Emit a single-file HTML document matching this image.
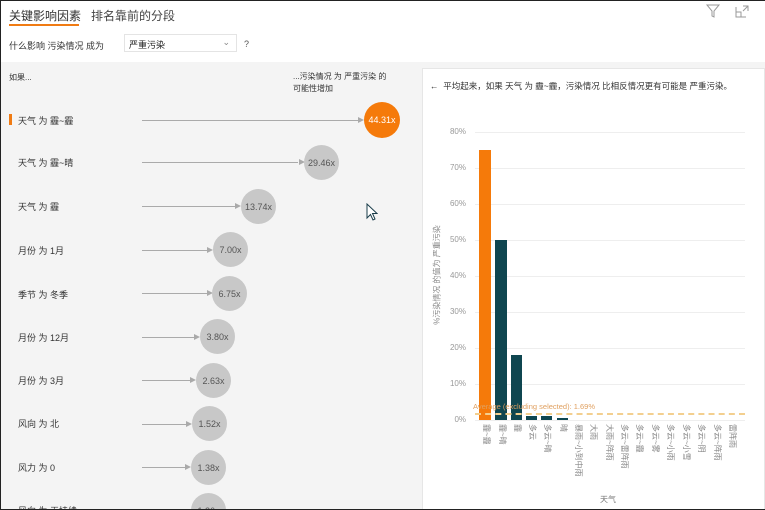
<!DOCTYPE html>
<html style="width:765px;height:510px;overflow:hidden"><head><meta charset="utf-8"><style>
*{margin:0;padding:0;box-sizing:border-box}
body{width:765px;height:510px;overflow:hidden;background:#fff;font-family:"Liberation Sans","Noto Sans CJK SC",sans-serif;position:relative;color:#333}
.a{position:absolute;white-space:nowrap}
.frame{position:absolute;left:0;top:0;width:765px;height:510px;border:1px solid #222;border-right:none;pointer-events:none}
.circ{position:absolute;border-radius:50%;background:#c8c8c8;color:#555;font-size:9px;display:flex;align-items:center;justify-content:center}
.ln{position:absolute;height:1px;background:#aaa}
.ar{position:absolute;width:0;height:0;border-left:6px solid #aaa;border-top:3px solid transparent;border-bottom:3px solid transparent}
.lab{position:absolute;font-size:9px;color:#333;left:18px;white-space:nowrap}
.yl{position:absolute;font-size:8px;color:#999;right:299px;width:30px;text-align:right}
.g{position:absolute;left:475px;width:270px;height:1px;background:#eee}
.xl{position:absolute;top:424px;font-size:8px;color:#888;writing-mode:vertical-rl;text-orientation:sideways;line-height:10px;white-space:nowrap}
</style></head><body>
<div class="a" style="left:9px;top:7px;font-size:12px;color:#333">关键影响因素</div>
<div style="position:absolute;left:9px;top:24px;width:70px;height:2px;background:#f07b13"></div>
<div class="a" style="left:91px;top:7px;font-size:12px;color:#444">排名靠前的分段</div>
<svg class="a" style="left:705px;top:3px" width="16" height="16" viewBox="0 0 16 16"><path d="M2 2H14L9 8V14L7 13V8Z" fill="none" stroke="#999" stroke-width="1"/></svg>
<svg class="a" style="left:734px;top:3px" width="16" height="16" viewBox="0 0 16 16"><path d="M2 4V14H12M2 9H7V14M9 3H14V8M14 3L9 8" fill="none" stroke="#999" stroke-width="1"/></svg>
<div class="a" style="left:9px;top:39px;font-size:9px;color:#333">什么影响 污染情况 成为</div>
<div class="a" style="left:124px;top:34px;width:113px;height:18px;border:1px solid #e4e4e4;font-size:9px;padding:3px 4px;color:#222">严重污染<span style="position:absolute;right:6px;top:2px;color:#888">⌄</span></div>
<div class="a" style="left:244px;top:39px;font-size:9px;color:#555">?</div>
<div style="position:absolute;left:0;top:62px;width:418px;height:448px;background:#f4f4f4"></div>
<div style="position:absolute;left:418px;top:62px;width:347px;height:448px;background:#f4f4f4"></div>
<div style="position:absolute;left:422px;top:68px;width:343px;height:442px;background:#fff;border:1px solid #e6e6e6"></div>
<div class="a" style="left:9px;top:72px;font-size:8px;color:#333">如果...</div>
<div class="a" style="left:293px;top:71px;font-size:8px;color:#333;line-height:12px">...污染情况 为 严重污染 的<br>可能性增加</div>
<div style="position:absolute;left:9px;top:114px;width:3px;height:11px;background:#f07b13"></div>
<div class="lab" style="top:114px">天气 为 霾~霾</div>
<div class="lab" style="top:156px">天气 为 霾~晴</div>
<div class="lab" style="top:200px">天气 为 霾</div>
<div class="lab" style="top:244px">月份 为 1月</div>
<div class="lab" style="top:288px">季节 为 冬季</div>
<div class="lab" style="top:331px">月份 为 12月</div>
<div class="lab" style="top:374px">月份 为 3月</div>
<div class="lab" style="top:417px">风向 为 北</div>
<div class="lab" style="top:461px">风力 为 0</div>
<div class="lab" style="top:504px">风向 为 无持续</div>
<div class="ln" style="left:142px;top:120px;width:218px"></div><div class="ar" style="left:358px;top:117px"></div>
<div class="circ" style="left:364px;top:102px;width:36px;height:36px;background:#f57a0a;color:#fff;font-size:9px">44.31x</div>
<div class="ln" style="left:142px;top:162px;width:156px"></div><div class="ar" style="left:299px;top:159px"></div>
<div class="circ" style="left:304px;top:145px;width:35px;height:35px">29.46x</div>
<div class="ln" style="left:142px;top:206px;width:93px"></div><div class="ar" style="left:235px;top:203px"></div>
<div class="circ" style="left:241px;top:189px;width:35px;height:35px">13.74x</div>
<div class="ln" style="left:142px;top:250px;width:65px"></div><div class="ar" style="left:207px;top:247px"></div>
<div class="circ" style="left:213px;top:232px;width:35px;height:35px">7.00x</div>
<div class="ln" style="left:142px;top:293px;width:65px"></div><div class="ar" style="left:207px;top:290px"></div>
<div class="circ" style="left:212px;top:276px;width:35px;height:35px">6.75x</div>
<div class="ln" style="left:142px;top:337px;width:52px"></div><div class="ar" style="left:194px;top:334px"></div>
<div class="circ" style="left:200px;top:319px;width:35px;height:35px">3.80x</div>
<div class="ln" style="left:142px;top:380px;width:48px"></div><div class="ar" style="left:190px;top:377px"></div>
<div class="circ" style="left:196px;top:363px;width:35px;height:35px">2.63x</div>
<div class="ln" style="left:142px;top:424px;width:44px"></div><div class="ar" style="left:186px;top:421px"></div>
<div class="circ" style="left:192px;top:406px;width:35px;height:35px">1.52x</div>
<div class="ln" style="left:142px;top:467px;width:43px"></div><div class="ar" style="left:185px;top:464px"></div>
<div class="circ" style="left:191px;top:450px;width:35px;height:35px">1.38x</div>
<div class="circ" style="left:191px;top:493px;width:35px;height:35px">1.26x</div>
<svg class="a" style="left:366px;top:203px" width="12" height="18" viewBox="0 0 12 18"><path d="M1 1V15L4.5 11.5L7 17L9 16L6.5 10.5H11Z" fill="#fff" stroke="#1a3d4a" stroke-width="1"/></svg>
<div class="a" style="left:430px;top:80px;font-size:8.5px;color:#333">←&nbsp; 平均起来，如果 天气 为 霾~霾，污染情况 比相反情况更有可能是 严重污染。</div>
<div class="yl" style="top:127px">80%</div><div class="g" style="top:132px"></div>
<div class="yl" style="top:163px">70%</div><div class="g" style="top:168px"></div>
<div class="yl" style="top:199px">60%</div><div class="g" style="top:204px"></div>
<div class="yl" style="top:235px">50%</div><div class="g" style="top:240px"></div>
<div class="yl" style="top:271px">40%</div><div class="g" style="top:276px"></div>
<div class="yl" style="top:307px">30%</div><div class="g" style="top:312px"></div>
<div class="yl" style="top:343px">20%</div><div class="g" style="top:348px"></div>
<div class="yl" style="top:379px">10%</div><div class="g" style="top:384px"></div>
<div class="yl" style="top:415px">0%</div><div class="g" style="top:420px"></div>
<div class="a" style="left:437px;top:275px;font-size:8px;color:#888;transform:translate(-50%,-50%) rotate(-90deg)">%污染情况 的值为 严重污染</div>
<div style="position:absolute;left:479px;top:150px;width:12px;height:270px;background:#f57a0a"></div>
<div style="position:absolute;left:495px;top:240px;width:12px;height:180px;background:#0f4650"></div>
<div style="position:absolute;left:511px;top:355px;width:11px;height:65px;background:#0f4650"></div>
<div style="position:absolute;left:526px;top:416px;width:11px;height:4px;background:#0f4650"></div>
<div style="position:absolute;left:541px;top:416px;width:11px;height:4px;background:#0f4650"></div>
<div style="position:absolute;left:557px;top:418px;width:11px;height:2px;background:#0f4650"></div>
<div style="position:absolute;left:475px;top:413px;width:270px;border-top:2px dashed #f3cf8f"></div>
<div class="a" style="left:473px;top:402px;font-size:7.5px;color:#e0a060">Average (excluding selected): 1.69%</div>
<div class="xl" style="left:481px">霾~霾</div>
<div class="xl" style="left:497px">霾~晴</div>
<div class="xl" style="left:512px">霾</div>
<div class="xl" style="left:527px">多云</div>
<div class="xl" style="left:542px">多云~晴</div>
<div class="xl" style="left:558px">晴</div>
<div class="xl" style="left:573px">暴雨~小到中雨</div>
<div class="xl" style="left:588px">大雨</div>
<div class="xl" style="left:604px">大雨~阵雨</div>
<div class="xl" style="left:619px">多云~雷阵雨</div>
<div class="xl" style="left:634px">多云~霾</div>
<div class="xl" style="left:650px">多云~雾</div>
<div class="xl" style="left:665px">多云~小雨</div>
<div class="xl" style="left:681px">多云~小雪</div>
<div class="xl" style="left:696px">多云~阴</div>
<div class="xl" style="left:712px">多云~阵雨</div>
<div class="xl" style="left:727px">雷阵雨</div>
<div class="a" style="left:600px;top:494px;font-size:8px;color:#777">天气</div>
<div class="frame"></div>
</body></html>
